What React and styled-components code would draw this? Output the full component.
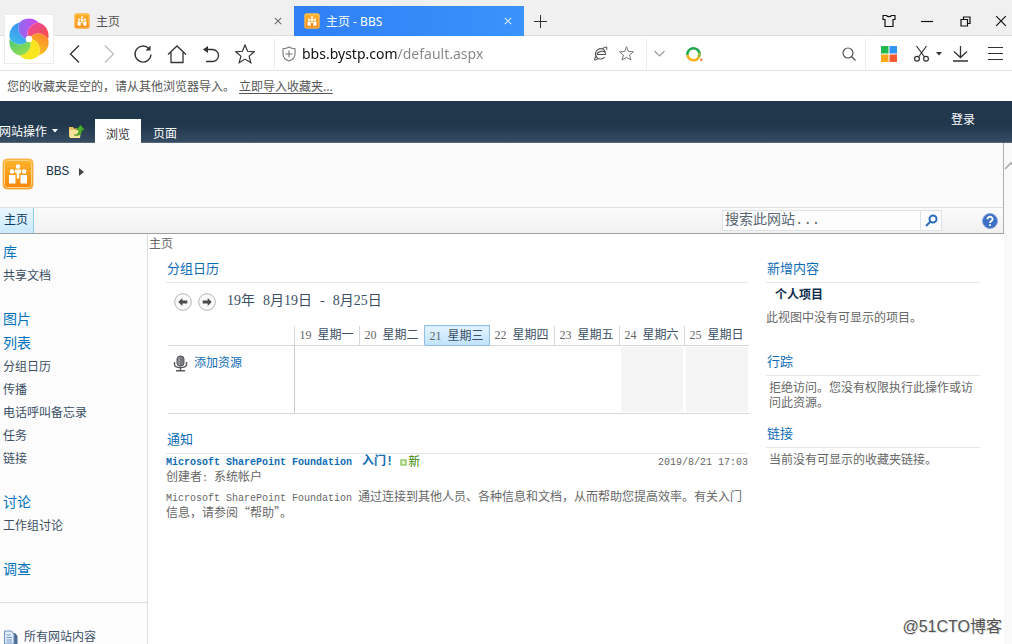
import React from 'react'
import styled, { createGlobalStyle, ThemeProvider } from 'styled-components'


const theme = {
    link: '#0072bc',
    heading: '#0f6cb6',
    text: '#3b4f65',
    muted: '#676767',
    line: '#e4e6e8',
    ribbon: '#21374c',
    sans: '"Noto Sans", "Noto Sans CJK SC", sans-serif',
    song: '"Liberation Serif", "Noto Sans CJK SC", serif',
    mono: '"Liberation Mono", "Noto Sans CJK SC", monospace',
}

const GlobalStyle = createGlobalStyle`
    *{
        box-sizing: border-box;
    }
    body{
        margin: 0;
        background: #fff;
        font-family: ${({theme})=>theme.song};
        font-size: 12px;
        line-height: 15px;
        color: ${({theme})=>theme.muted};
    }
    h2, h3, p, ul{
        margin: 0;
        padding: 0;
        font-weight: normal;
    }
    ul{
        list-style: none;
    }
    a{
        color: inherit;
        text-decoration: none;
    }
    button, input{
        font: inherit;
        color: inherit;
        border: none;
        background: none;
        padding: 0;
        outline: none;
    }
    svg{
        display: block;
        flex: none;
    }
`

const Window = styled.div`
    display: flex;
    flex-direction: column;
    height: 100vh;
    overflow: hidden;
    position: relative;
`

/* ---- browser frame ---- */

const Chrome = styled.header`
    display: grid;
    grid-template-columns: 58px 1fr;
    grid-template-rows: 36px 35px;
    background: linear-gradient(#f0f0f0 35px, #dcdcdc 35px, #dcdcdc 36px, #fff 36px);
    border-bottom: 1px solid #e3e3e3;
    height: 71px;
    font-family: ${({theme})=>theme.sans};
    color: #333;
`

const LogoTile = styled.div`
    grid-row: 1 / 3;
    align-self: start;
    margin: 14px 0 0 4px;
    width: 50px;
    height: 50px;
    display: flex;
    align-items: center;
    justify-content: center;
    background: #fff;
    border: 1px solid #ececec;
`

const TabStrip = styled.div`
    display: flex;
    align-items: flex-end;
    padding-left: 6px;
`

const Tab = styled.div`
    display: flex;
    align-items: center;
    gap: 6px;
    width: 230px;
    height: 30px;
    padding: 0 12px 0 10px;
    color: ${({$active})=>$active ? '#fff' : '#555'};
    background: ${({$active})=>$active ? 'linear-gradient(90deg, #2f7ff5, #3a93fb)' : 'none'};
`

const TabTitle = styled.button`
    flex: 1;
    text-align: left;
`

const IconButton = styled.button`
    display: flex;
    align-items: center;
    justify-content: center;
    gap: ${({$gap})=>$gap || 0}px;
    width: ${({$w})=>$w || 34}px;
    height: ${({$h})=>$h || 34}px;
    color: ${({$color})=>$color || '#333'};
`

const WindowButtons = styled.div`
    display: flex;
    align-items: center;
    height: 30px;
    margin-left: auto;

    button:last-child{
        margin-left: 6px;
    }
`

const Toolbar = styled.div`
    display: flex;
    align-items: center;
`

const Address = styled.label`
    display: flex;
    align-items: center;
    gap: 5px;
    flex: 1;
    height: 30px;
    margin-left: 12px;
    padding: 0 12px 0 6px;
    border-left: 1px solid #ececec;
    color: #777;
`

const UrlInput = styled.input`
    flex: 1;
    min-width: 0;
    height: 24px;
    font-size: 14px;
    color: transparent;
    background: linear-gradient(90deg, #111 95px, #858585 95px);
    background-clip: text;
    -webkit-background-clip: text;
`

const WebSearch = styled.label`
    display: flex;
    align-items: center;
    width: 220px;
    height: 30px;
    border: solid #ececec;
    border-width: 0 1px;
`

const PlainInput = styled.input`
    flex: 1;
    min-width: 0;
`

const FavoritesBar = styled.div`
    display: flex;
    align-items: center;
    gap: 4px;
    height: 30px;
    padding-left: 7px;
    font-family: ${({theme})=>theme.sans};
    color: #555;

    a{
        text-decoration: underline;
        text-underline-offset: 2px;
    }
`

/* ---- ribbon ---- */

const Ribbon = styled.nav`
    display: flex;
    align-items: flex-end;
    flex: none;
    height: 42px;
    background: linear-gradient(#21374c 60%, #364c63);
    border-bottom: 1px solid #56677a;
    color: #fff;
    font-family: ${({theme})=>theme.sans};
`

const SiteActions = styled.button`
    display: flex;
    align-items: center;
    gap: 5px;
    height: 22px;
    margin-left: -1px;
`

const RibbonTab = styled.a`
    display: flex;
    align-items: center;
    justify-content: center;
    width: 46px;
    height: ${({$active})=>$active ? 24 : 23}px;
    padding-top: 6px;
    margin-right: 1px;
    margin-bottom: ${({$active})=>$active ? -1 : 0}px;
    color: ${({$active})=>$active ? '#333' : '#fff'};
    background: ${({$active})=>$active ? '#fff' : 'none'};
`

const SignIn = styled.a`
    align-self: center;
    margin-left: auto;
    padding: 0 37px 4px 0;
`

/* ---- site page ---- */

const Page = styled.div`
    display: flex;
    flex: 1;
    min-height: 0;
`

const Site = styled.div`
    display: flex;
    flex-direction: column;
    flex: 1;
    min-width: 0;
`

const ScrollGutter = styled.div`
    width: 8px;
    padding-top: 16px;
    background: #f9f9f9;
    overflow: hidden;
`

const SiteHeader = styled.div`
    border-right: 1px solid #a9b0b6;
    border-bottom: 1px solid #a0a0a0;
    background: #fbfbfb;
`

const TitleRow = styled.div`
    display: flex;
    gap: 12px;
    height: 64px;
    padding: 15px 0 0 2px;
`

const SiteTitle = styled.a`
    display: flex;
    align-items: center;
    gap: 10px;
    height: 27px;
    font-family: ${({theme})=>theme.mono};
    font-size: 13px;
    color: ${({theme})=>theme.ribbon};
`

const TopNav = styled.div`
    display: flex;
    align-items: center;
    height: 26px;
    border-top: 1px solid #dcdee0;
    background: linear-gradient(#fbfbfb, #f1f1f2);
`

const TopNavItem = styled.a`
    align-self: stretch;
    padding: 5px 5px 0 4px;
    color: #0b3c66;
    background: linear-gradient(#e9f6ff, #c9e9fd);
    border-right: 1px solid #91cdf2;
`

const SiteSearch = styled.form`
    display: flex;
    width: 220px;
    height: 21px;
    margin-left: auto;
    margin-right: 34px;
    border: 1px solid #e0e3e6;
    background: #fdfdfd;
`

const SiteSearchInput = styled.input`
    flex: 1;
    min-width: 0;
    padding-left: 2px;
    font-family: ${({theme})=>theme.mono};
    font-size: 14px;
    border-right: 1px solid #e0e3e6;

    &::placeholder{
        color: #5a6673;
        opacity: 1;
    }
`

const Body = styled.div`
    display: flex;
    flex: 1;
    min-height: 0;
`

const Sidebar = styled.nav`
    width: 148px;
    padding-top: 7px;
    background: #fcfcfc;
    border-right: 1px solid #dbddde;
`

const NavGroup = styled.ul`
    margin-bottom: 20px;
    padding-left: 3px;
`

const NavHeading = styled.li`
    font-size: 14px;
    line-height: 24px;
    color: ${({theme})=>theme.link};
`

const NavItem = styled.li`
    line-height: 23px;
    color: ${({theme})=>theme.text};
`

const AllContent = styled.a`
    display: flex;
    gap: 6px;
    padding: 27px 0 0 4px;
    border-top: 1px solid #dbddde;
    color: ${({theme})=>theme.text};
`

const Main = styled.main`
    flex: 1;
    min-width: 0;
    padding-left: 1px;
`

const PageName = styled.div`
    padding-top: 2px;
    line-height: 17px;
`

const Zones = styled.div`
    display: grid;
    grid-template-columns: 1fr 214px;
    gap: 18px;
    padding: 7px 24px 0 17px;
`

const PartTitle = styled.h2`
    padding-left: 1px;
    margin-bottom: ${({$after})=>$after || 0}px;
    padding-bottom: 5px;
    border-bottom: 1px solid ${({theme})=>theme.line};
    font-size: 13px;
    line-height: 17px;
    color: ${({theme})=>theme.heading};
`

const CalendarBar = styled.div`
    display: flex;
    align-items: center;
    gap: 6px;
    height: 38px;
    padding-left: 8px;
`

const DateRange = styled.div`
    display: flex;
    gap: 8px;
    margin-left: 5px;
    padding-bottom: 3px;
    font-size: 14px;
    color: ${({theme})=>theme.text};
`

const CalendarTable = styled.table`
    width: calc(100% - 1px);
    margin: 4px 0 17px 2px;
    table-layout: fixed;
    border-collapse: collapse;
    color: ${({theme})=>theme.text};
`

const DayHead = styled.th`
    width: ${({$corner})=>$corner ? '126px' : 'auto'};
    height: 20px;
    padding: 1px 0 0 5px;
    text-align: left;
    font-weight: normal;
    white-space: nowrap;
    border: 1px solid #d5d9dc;
    border-width: ${({$corner})=>$corner ? '0 0 1px' : '0 0 1px 1px'};
    ${({$today})=>$today && `
        background: linear-gradient(#e3f3ff, #bfe2fb);
        border: 1px solid #8fbfe2;
    `}

    span{
        margin-right: 6px;
        color: #666;
    }
`

const DayCell = styled.td`
    height: 68px;
    padding: ${({$resource})=>$resource ? '9px 0 0 5px' : '1px'};
    vertical-align: top;
    border-bottom: 1px solid #d5d9dc;
    border-right: ${({$resource})=>$resource ? '1px solid #c9cdd1' : 'none'};
`

const Weekend = styled.div`
    height: 65px;
    margin-left: 1px;
    background: #f5f5f5;
`

const Resource = styled.a`
    display: flex;
    align-items: center;
    gap: 6px;
    color: ${({theme})=>theme.heading};
`

const NewsHead = styled.div`
    display: flex;
    align-items: center;
    height: 16px;
`

const NewsTitle = styled.a`
    display: flex;
    align-items: baseline;
    gap: 10px;
    font-family: ${({theme})=>theme.mono};
    font-weight: bold;
    color: ${({theme})=>theme.heading};
`

const Latin = styled.span`
    font-family: ${({theme})=>theme.mono};
    font-size: 10px;
    line-height: 1;
    white-space: pre-wrap;
`

const NewBadge = styled.span`
    display: flex;
    align-items: center;
    gap: 1px;
    margin-left: 7px;
    color: #3c8a00;
`

const Stamp = styled.time`
    margin-left: auto;
    font-family: ${({theme})=>theme.mono};
    font-size: 10px;
`

const NewsBody = styled.p`
    margin-top: 3px;
    font-family: "Noto Sans CJK SC", sans-serif;
`

const SidePart = styled.section`
    margin-bottom: ${({$after})=>$after || 0}px;

    p{
        padding-left: ${({$indent})=>$indent || 0}px;
    }
`

const ViewName = styled.h3`
    padding: 4px 0 7px 9px;
    font-size: 12px;
    line-height: 17px;
    font-weight: bold;
    color: #0b2d4d;
`

const Watermark = styled.div`
    position: absolute;
    right: 10px;
    bottom: 6px;
    font-family: "Liberation Sans", "Noto Sans CJK SC", sans-serif;
    font-size: 16px;
    line-height: 22px;
    color: #555;
    text-shadow: 1px 1px 0 #ddd;
`

/* ---- icons ---- */

const Line = ({size = 20, w = 1.2, box = 20, children}) => (
    <svg width={size} height={size} viewBox={`0 0 ${box} ${box}`} fill="none" stroke="currentColor" strokeWidth={w}>
        {children}
    </svg>
)

const PETALS = [
    ['#8b6cf0', '#d545ea'], ['#ee4a9a', '#f6503c'], ['#fb8a2e', '#f9c81e'],
    ['#fbe31c', '#f3ea20'], ['#8fdc4e', '#4bcb7a'], ['#3fb8e8', '#3b8df6'],
]

const Pinwheel = () => (
    <svg width="42" height="42" viewBox="-22 -22 44 44">
        <defs>
            {PETALS.map(([from, to], i) => (
                <linearGradient key={i} id={`petal${i}`}>
                    <stop offset="0" stopColor={from} />
                    <stop offset="1" stopColor={to} />
                </linearGradient>
            ))}
        </defs>
        {PETALS.map((c, i) => (
            <path key={i} transform={`rotate(${i * 60})`} fill={`url(#petal${i})`}
                d="M0 0C-8 0 -14 -8 -10 -17.3A14 14 0 0 1 10 -17.3C-.1 -16.1 -4 -6.9 0 0Z" />
        ))}
        <circle r="3.4" fill="#fff" />
    </svg>
)

const SiteIcon = ({size}) => (
    <svg width={size} height={size} viewBox="0 0 32 32">
        <defs>
            <linearGradient id="orange" x1="0" y1="0" x2="0" y2="1">
                <stop offset="0" stopColor="#fdb52c" />
                <stop offset="1" stopColor="#f5860b" />
            </linearGradient>
        </defs>
        <rect x="1" y="1" width="30" height="30" rx="4" fill="url(#orange)" stroke="#f7b559" />
        <rect x="2.5" y="2.5" width="27" height="27" rx="3" fill="none" stroke="#ffd383" />
        <g fill="#fff">
            <circle cx="16" cy="8.500" r="2.200" />
            <path d="M13 11.500h6v3l-1.800 1v5h-2.400v-5l-1.800-1z" />
            <circle cx="10" cy="13.500" r="2.300" />
            <circle cx="22" cy="13.500" r="2.300" />
            <path d="M7 17h6.500v8.500H7zM18.500 17H25v8.500h-6.500z" />
        </g>
    </svg>
)

const Cross = ({size = 8, w = 1.3}) => (
    <Line size={size} box={10} w={w}><path d="M1 1l8 8M9 1l-8 8" /></Line>
)

const CaretDown = () => (
    <svg width="6" height="4" viewBox="0 0 6 4"><path d="M0 0h6L3 3.5z" fill="currentColor" /></svg>
)

const Shirt = () => (
    <Line size={14} box={14} w={1.2}>
        <path d="M1 1.500h3.500c.6 1.600 4.400 1.600 5 0H13v4h-2v7H3v-7H1z" />
    </Line>
)

const Restore = () => (
    <Line size={11} box={11} w={1.2}><path d="M1 3.500h6.500V10H1zM3.500 3.500V1H10v6.500H7.500" /></Line>
)

const Star = ({size}) => (
    <Line size={size} w={1.2}>
        <path d="M10 1l2.600 6.300 6.700.5-5.200 4.300 1.700 6.600L10 15.100l-5.800 3.600 1.700-6.600L.7 7.800l6.700-.5z" />
    </Line>
)

const Shield = () => (
    <Line size={16} box={16} w={1.1}>
        <path d="M8 1c2 1.300 3.500 1.600 6 1.700V8c0 3.500-2.500 5.800-6 7-3.500-1.200-6-3.500-6-7V2.700C4.500 2.600 6 2.300 8 1zM8 4.500v7M4.500 8h7" />
    </Line>
)

const Browser = () => (
    <Line size={15} box={16} w={1.2}>
        <path d="M13.500 9H4.200M13.300 6.500A5.500 5.500 0 1 0 12.500 11.700M4.200 9c.5-3.500 8.500-5 9.200-1v1" />
        <path d="M3.500 11C0 15 2 16 5.500 13.500M10 3c4-3 5.500-2.500 4.500 1" />
    </Line>
)

const Scissors = () => (
    <Line size={17} box={17} w={1.2}>
        <path d="M3.500 1l8 11M13.500 1l-8 11" />
        <circle cx="4" cy="13.800" r="2.400" />
        <circle cx="13" cy="13.800" r="2.400" />
    </Line>
)

const Squares = () => (
    <svg width="16" height="16" viewBox="0 0 16 16">
        <path fill="#22b84e" d="M0 0h7.500v7.500H0z" />
        <path fill="#2f95f0" d="M8.500 0H16v7.500H8.500z" />
        <path fill="#fba61a" d="M0 8.500h7.500V16H0z" />
        <path fill="#f35b33" d="M8.500 8.500H16V16H8.500z" />
    </svg>
)

const SearchRing = () => (
    <svg width="17" height="16" viewBox="0 0 17 16" fill="none" strokeWidth="2.600">
        <path d="M1.500 9A6 6 0 1 1 13.500 7.500" stroke="#1fa84c" />
        <path d="M13.500 7.500A6 6 0 0 1 1.500 9" stroke="#f8b01c" />
        <path d="M13.500 6.500A6 6 0 0 1 12.500 10.800" stroke="#7fc03c" />
        <circle cx="15.300" cy="13.700" r="1.200" fill="#f5742c" />
    </svg>
)

const FolderUp = () => (
    <svg width="17" height="15" viewBox="0 0 17 15">
        <path d="M1 3h4l1 1.500h6V13H1z" fill="#e9bf63" />
        <path d="M1 6h12l-1 8H2z" fill="#fbe29a" />
        <path d="M6 11c3.500 0 5-2 5-5H8.500L12.500 1l4 5H14c0 4-3 6.500-8 5z" fill="#4cae2c" stroke="#2f8018" strokeWidth=".5" />
    </svg>
)

const RoundArrow = ({back}) => (
    <svg width="18" height="18" viewBox="0 0 18 18">
        <circle cx="9" cy="9" r="8.300" fill="#fafafa" stroke="#b5b5b5" />
        <path transform={back ? undefined : 'rotate(180 9 9)'} d="M4.300 9l4-4v2.600h5v2.800h-5V13z" fill="#4b4b4b" />
    </svg>
)

const Microphone = () => (
    <svg width="15" height="17" viewBox="0 0 15 17">
        <rect x="4" y="1" width="7" height="10" rx="3" fill="#77797c" stroke="#55585c" />
        <path d="M6 2v8" stroke="#a9abae" />
        <path d="M1.500 7v2.500c0 2 2 3 6 3s6-1 6-3V7M7.500 12.500V15M3 15.800h9" fill="none" stroke="#55585c" strokeWidth="1.400" />
    </svg>
)

const Pages = () => (
    <svg width="14" height="16" viewBox="0 0 14 16">
        <path d="M5 3h6l2.500 3v9.500H5z" fill="#4d6a92" />
        <path d="M.5 1h7L10 4v10H.5z" fill="#dfeafa" stroke="#6d8fbf" />
        <path d="M2.500 5h4M2.500 7.500H8M2.500 10H8M2.500 12H8" stroke="#7d9ccb" />
    </svg>
)

const Help = () => (
    <svg width="16" height="16" viewBox="0 0 16 16">
        <circle cx="8" cy="8" r="7.500" fill="#3d6fc4" stroke="#8ba8d8" />
        <path d="M5.500 6.300C5.500 2.900 10.700 3 10.600 6.100 10.500 7.900 8 8 8 10M8 11.200v1.800" fill="none" stroke="#fff" strokeWidth="1.800" />
    </svg>
)

const NewMark = () => (
    <svg width="7" height="7" viewBox="0 0 7 7">
        <rect x="1" y="1" width="5" height="5" fill="#e4f5cf" stroke="#8cc860" strokeWidth="1.400" />
    </svg>
)

/* ---- content ---- */

const NAV = [
    {headings: ['库'], items: ['共享文档']},
    {headings: ['图片', '列表'], items: ['分组日历', '传播', '电话呼叫备忘录', '任务', '链接']},
    {headings: ['讨论'], items: ['工作组讨论']},
    {headings: ['调查'], items: []},
]

const DAYS = [
    [19, '星期一'], [20, '星期二'], [21, '星期三'], [22, '星期四'],
    [23, '星期五'], [24, '星期六'], [25, '星期日'],
]

const BrowserTab = ({title, active}) => (
    <Tab $active={active}>
        <SiteIcon size={16} />
        <TabTitle>{title}</TabTitle>
        <IconButton $w={9} $h={20} $color={active ? '#d8e9ff' : '#666'} aria-label="关闭标签">
            <Cross />
        </IconButton>
    </Tab>
)

const BrowserFrame = () => (
    <Chrome>
        <LogoTile><Pinwheel /></LogoTile>
        <TabStrip>
            <BrowserTab title="主页" />
            <BrowserTab title="主页 - BBS" active />
            <IconButton $w={32} $h={30} aria-label="新标签">
                <Line size={13} box={13} w={1}><path d="M6.500 0v13M0 6.500h13" /></Line>
            </IconButton>
            <WindowButtons>
                <IconButton $w={38} $color="#111" aria-label="皮肤"><Shirt /></IconButton>
                <IconButton $w={38} $color="#111" aria-label="最小化">
                    <Line size={12} box={12} w={1.2}><path d="M0 6.500h12" /></Line>
                </IconButton>
                <IconButton $w={38} $color="#111" aria-label="还原"><Restore /></IconButton>
                <IconButton $w={22} $color="#111" aria-label="关闭"><Cross size={12} w={1} /></IconButton>
            </WindowButtons>
        </TabStrip>
        <Toolbar>
            <IconButton aria-label="后退"><Line w={1.4}><path d="M14 1.500L5.500 10l8.500 8.500" /></Line></IconButton>
            <IconButton $color="#bbb" aria-label="前进"><Line><path d="M6 1.500l8.500 8.500L6 18.500" /></Line></IconButton>
            <IconButton aria-label="刷新">
                <Line w={1.3}><path d="M18 10.500A8 8 0 1 1 15.800 4.500" /><path d="M17.500 1.500v5h-5z" fill="currentColor" stroke="none" /></Line>
            </IconButton>
            <IconButton aria-label="主页"><Line w={1.3}><path d="M1 10.500L10 2l9 8.500M4 8.500v10h12v-10" /></Line></IconButton>
            <IconButton aria-label="恢复">
                <Line w={1.3}><path d="M3 5.500h8.500a5.700 5.700 0 0 1 0 12H5" /><path d="M7 2v7L2 5.500z" fill="currentColor" stroke="none" /></Line>
            </IconButton>
            <IconButton aria-label="收藏"><Star size={20} /></IconButton>
            <Address>
                <Shield />
                <UrlInput aria-label="地址" defaultValue="bbs.bystp.com/default.aspx" />
                <IconButton $w={26} $color="#555" aria-label="浏览模式"><Browser /></IconButton>
                <IconButton $w={16} $color="#666" aria-label="添加收藏"><Star size={15} /></IconButton>
            </Address>
            <WebSearch>
                <IconButton $w={24} $color="#999" aria-label="展开">
                    <Line size={11} box={11}><path d="M.5 3l5 5 5-5" /></Line>
                </IconButton>
                <IconButton $w={46} aria-label="搜索引擎"><SearchRing /></IconButton>
                <PlainInput aria-label="网页搜索" />
                <IconButton $w={32} $color="#555" aria-label="搜索">
                    <Line size={14} box={14}><circle cx="6" cy="6" r="5" /><path d="M9.500 9.500l4 4" /></Line>
                </IconButton>
            </WebSearch>
            <IconButton $w={46} aria-label="应用"><Squares /></IconButton>
            <IconButton $w={30} $gap={6} aria-label="截图"><Scissors /><CaretDown /></IconButton>
            <IconButton $w={36} aria-label="下载">
                <Line size={17} box={17} w={1.3}><path d="M8.500 1v11.500M2 6.500l6.500 6 6.500-6M1 16h15" /></Line>
            </IconButton>
            <IconButton $w={34} aria-label="菜单">
                <Line size={15} box={15}><path d="M0 1.500h15M0 7.500h15M0 13.500h15" /></Line>
            </IconButton>
        </Toolbar>
    </Chrome>
)

const Calendar = () => (
    <section>
        <PartTitle>分组日历</PartTitle>
        <CalendarBar>
            <IconButton $w={18} $h={18} aria-label="上一周"><RoundArrow back /></IconButton>
            <IconButton $w={18} $h={18} aria-label="下一周"><RoundArrow /></IconButton>
            <DateRange>
                <span>19年</span><span>8月19日</span><span>-</span><span>8月25日</span>
            </DateRange>
        </CalendarBar>
        <CalendarTable>
            <thead>
                <tr>
                    <DayHead $corner aria-label="资源" />
                    {DAYS.map(([num, name]) => (
                        <DayHead key={num} $today={num === 21}><span>{num}</span>{name}</DayHead>
                    ))}
                </tr>
            </thead>
            <tbody>
                <tr>
                    <DayCell $resource>
                        <Resource href="#"><Microphone />添加资源</Resource>
                    </DayCell>
                    {DAYS.map(([num]) => (
                        <DayCell key={num}>{num > 23 && <Weekend />}</DayCell>
                    ))}
                </tr>
            </tbody>
        </CalendarTable>
    </section>
)

const News = () => (
    <section>
        <PartTitle>通知</PartTitle>
        <NewsHead>
            <NewsTitle href="#"><Latin>Microsoft SharePoint Foundation</Latin>入门!</NewsTitle>
            <NewBadge><NewMark />新</NewBadge>
            <Stamp>2019/8/21 17:03</Stamp>
        </NewsHead>
        <p>创建者<Latin>: </Latin>系统帐户</p>
        <NewsBody>
            <Latin>Microsoft SharePoint Foundation </Latin>
            通过连接到其他人员、各种信息和文档，从而帮助您提高效率。有关入门信息，请参阅“帮助”。
        </NewsBody>
    </section>
)

export default function App(){
    return (
        <ThemeProvider theme={theme}>
            <GlobalStyle />
            <Window>
                <BrowserFrame />
                <FavoritesBar>
                    <span>您的收藏夹是空的，请从其他浏览器导入。</span>
                    <a href="#">立即导入收藏夹...</a>
                </FavoritesBar>
                <Ribbon>
                    <SiteActions>网站操作<CaretDown /></SiteActions>
                    <IconButton $w={37} $h={22} aria-label="向上导航"><FolderUp /></IconButton>
                    <RibbonTab href="#" $active>浏览</RibbonTab>
                    <RibbonTab href="#">页面</RibbonTab>
                    <SignIn href="#">登录</SignIn>
                </Ribbon>
                <Page>
                    <Site>
                        <SiteHeader>
                            <TitleRow>
                                <SiteIcon size={32} />
                                <SiteTitle href="#">
                                    BBS
                                    <svg width="5" height="8" viewBox="0 0 5 8"><path d="M0 0v8l5-4z" fill="#444" /></svg>
                                </SiteTitle>
                            </TitleRow>
                            <TopNav>
                                <TopNavItem href="#">主页</TopNavItem>
                                <SiteSearch onSubmit={(e) => e.preventDefault()}>
                                    <SiteSearchInput aria-label="搜索此网站" placeholder="搜索此网站..." />
                                    <IconButton $w={20} $h={19} $color="#2a6ebb" aria-label="搜索">
                                        <Line size={13} box={13} w={2}><circle cx="8" cy="5" r="3.500" /><path d="M5.500 7.500L1 12" /></Line>
                                    </IconButton>
                                </SiteSearch>
                                <IconButton $w={27} $h={20} aria-label="帮助"><Help /></IconButton>
                            </TopNav>
                        </SiteHeader>
                        <Body>
                            <Sidebar>
                                {NAV.map(({headings, items}) => (
                                    <NavGroup key={headings[0]}>
                                        {headings.map((h) => <NavHeading key={h}><a href="#">{h}</a></NavHeading>)}
                                        {items.map((t) => <NavItem key={t}><a href="#">{t}</a></NavItem>)}
                                    </NavGroup>
                                ))}
                                <AllContent href="#"><Pages />所有网站内容</AllContent>
                            </Sidebar>
                            <Main>
                                <PageName>主页</PageName>
                                <Zones>
                                    <div>
                                        <Calendar />
                                        <News />
                                    </div>
                                    <div>
                                        <SidePart $after={27}>
                                            <PartTitle>新增内容</PartTitle>
                                            <ViewName>个人项目</ViewName>
                                            <p>此视图中没有可显示的项目。</p>
                                        </SidePart>
                                        <SidePart $after={14} $indent={3}>
                                            <PartTitle $after={5}>行踪</PartTitle>
                                            <p>拒绝访问。您没有权限执行此操作或访问此资源。</p>
                                        </SidePart>
                                        <SidePart $indent={3}>
                                            <PartTitle $after={5}>链接</PartTitle>
                                            <p>当前没有可显示的收藏夹链接。</p>
                                        </SidePart>
                                    </div>
                                </Zones>
                            </Main>
                        </Body>
                    </Site>
                    <ScrollGutter>
                        <Line size={12} box={12} w={1.6}><path d="M1 10l6-6 5 5" stroke="#aaa" /></Line>
                    </ScrollGutter>
                </Page>
                <Watermark>@51CTO博客</Watermark>
            </Window>
        </ThemeProvider>
    )
}
